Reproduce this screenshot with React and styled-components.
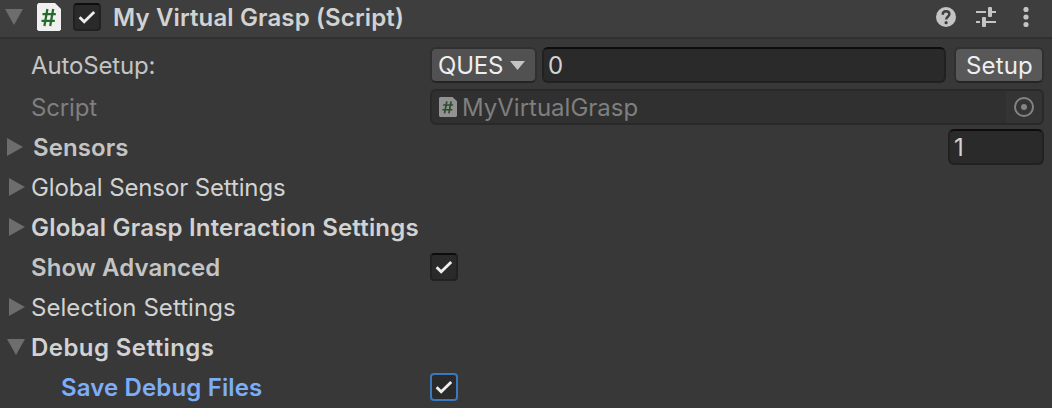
import React from "react";
import styled, { createGlobalStyle, css } from "styled-components";

const GlobalStyle = createGlobalStyle`
  * { box-sizing: border-box; }
  body { margin: 0; background: #383838; overflow: hidden; }
`;

const Inspector = styled.main`
  width: 1052px;
  height: 408px;
  overflow: hidden;
  background: #383838;
  color: #d2d2d2;
  font-family: Inter, "Liberation Sans", sans-serif;
  font-size: 24px;
  line-height: 36px;
  white-space: nowrap;
`;

const Header = styled.header`
  display: flex;
  align-items: center;
  height: 39px;
  padding: 0 19px 4px 5px;
  background: #3e3e3e;
  border-bottom: 2px solid #303030;
`;

const Title = styled.h1`
  flex: 1;
  margin: 0 0 0 12px;
  padding-top: 2px;
  font-size: 24px;
  font-weight: 600;
  line-height: 31px;
  letter-spacing: 0.13px;
`;

const HeaderIcons = styled.div`
  display: flex;
  align-items: center;
  gap: 20px;
`;

const Body = styled.section`
  padding: 4px 8px 0 0;
`;

const Row = styled.div`
  display: flex;
  align-items: center;
  height: ${(p) => p.$height || 40}px;
`;

const LabelCell = styled.div`
  display: flex;
  align-items: center;
  flex: none;
  width: 430px;
  padding-left: ${(p) => p.$indent || 0}px;
`;

const Foldout = styled.span`
  display: flex;
  flex: none;
  width: ${(p) => p.$width}px;
`;

const Label = styled.span`
  padding-top: 2px;
  color: ${(p) => p.$color || "#d2d2d2"};
  font-weight: ${(p) => (p.$bold ? 600 : 400)};
  letter-spacing: ${(p) => p.$spacing || 0}px;
`;

const Check = styled.span`
  display: flex;
  align-items: center;
  justify-content: center;
  flex: none;
  width: 28px;
  height: 28px;
  margin-left: ${(p) => p.$gap || 0}px;
  background: #2a2a2a;
  border: 2px solid ${(p) => (p.$focused ? "#3a79bb" : "#212121")};
  border-top-color: ${(p) => (p.$focused ? "#3a79bb" : "#0d0d0d")};
  border-radius: 4px;
`;

const control = css`
  display: flex;
  align-items: center;
  height: 36px;
  border-radius: 6px;
  line-height: 30px;
`;

const Field = styled.div`
  ${control}
  ${(p) => (p.$width ? `width: ${p.$width}px;` : "flex: 1;")}
  padding: 2px 0 0 4px;
  margin-left: ${(p) => p.$gap || 0}px;
  background: #2a2a2a;
  border: 2px solid #212121;
  border-top-color: #0d0d0d;
`;

const Button = styled.button`
  ${control}
  width: ${(p) => p.$width}px;
  margin: 0 0 0 ${(p) => p.$gap || 0}px;
  padding: 2px 0 0 ${(p) => p.$pad}px;
  color: #eeeeee;
  background: ${(p) => p.$fill};
  border: 2px solid #303030;
  border-bottom-color: #242424;
  font-family: inherit;
  font-size: 24px;
  letter-spacing: ${(p) => p.$spacing || 0}px;
`;

const DropArrowBox = styled.span`
  display: flex;
  padding: 0 0 2px 7px;
`;

const ObjectField = styled.div`
  ${control}
  flex: 1;
  padding-left: 7px;
  color: #7f7f7f;
  background: #303030;
  border: 2px solid #292929;
  overflow: hidden;
`;

const ObjectName = styled.span`
  flex: 1;
  margin-left: 5px;
  padding-top: 2px;
`;

const Picker = styled.span`
  display: flex;
  align-items: center;
  justify-content: center;
  width: 36px;
  height: 32px;
  background: #343434;
`;

const Arrow = ({ open }) =>
  open ? (
    <svg width="18" height="16" viewBox="0 0 18 16"><path d="M0 0H18L9 16Z" fill="#6d6d6d" /></svg>
  ) : (
    <svg width="16" height="18" viewBox="0 0 16 18"><path d="M0 0L16 9L0 18Z" fill="#6d6d6d" /></svg>
  );

const CheckMark = () => (
  <svg width="24" height="24" viewBox="0 0 24 24">
    <path d="M4.6 12.2L9.2 16.8L19.2 7" fill="none" stroke="#eeeeee" strokeWidth="2.8" />
  </svg>
);

const ScriptIcon = ({ width, height, paper, ink }) => (
  <svg width={width} height={height} viewBox="0 0 24 28" preserveAspectRatio="none">
    <path d="M1.5 0H18L24 6V26.5L22.5 28H1.5L0 26.5V1.5Z" fill={paper} />
    <path d="M10.4 6L7.4 23M16.2 6L13.2 23M5.5 11.2H18.8M4.5 17.8H17.8" fill="none" stroke={ink} strokeWidth="2.3" />
  </svg>
);

const HelpIcon = () => (
  <svg width="20" height="20" viewBox="0 0 20 20">
    <circle cx="10" cy="10" r="10" fill="#c4c4c4" />
    <path d="M6.7 7.7C6.7 5.5 8 4.3 10 4.3S13.4 5.6 13.4 7.3C13.4 9.6 10.2 9.4 10.2 12.6" fill="none" stroke="#3e3e3e" strokeWidth="2.4" />
    <circle cx="10.1" cy="15.7" r="1.6" fill="#3e3e3e" />
  </svg>
);

const PresetIcon = () => (
  <svg width="20" height="20" viewBox="0 0 20 20">
    <path d="M0 5H10M16 5H20M0 15H4M10 15H20" stroke="#c4c4c4" strokeWidth="2" />
    <rect x="12" y="0" width="4" height="10" rx="1" fill="#c4c4c4" />
    <rect x="6" y="10" width="4" height="10" rx="1" fill="#c4c4c4" />
  </svg>
);

const MenuIcon = () => (
  <svg width="17" height="20" viewBox="0 0 17 20" fill="#c4c4c4">
    <circle cx="10" cy="2.5" r="2.6" />
    <circle cx="10" cy="10" r="2.6" />
    <circle cx="10" cy="17.5" r="2.6" />
  </svg>
);

const PickerIcon = () => (
  <svg width="20" height="20" viewBox="0 0 20 20">
    <circle cx="10" cy="10" r="9" fill="none" stroke="#848484" strokeWidth="2" />
    <circle cx="10" cy="10" r="3" fill="#848484" />
  </svg>
);

const DropArrow = () => (
  <svg width="15" height="9" viewBox="0 0 15 9"><path d="M0 0H15L7.5 9Z" fill="#c4c4c4" /></svg>
);

export default function App() {
  return (
    <Inspector>
      <GlobalStyle />
      <Header>
        <Foldout $width={32}><Arrow open /></Foldout>
        <ScriptIcon width={24} height={28} paper="#f0f0f0" ink="#256b29" />
        <Check $gap={12}><CheckMark /></Check>
        <Title>My Virtual Grasp (Script)</Title>
        <HeaderIcons>
          <HelpIcon />
          <PresetIcon />
          <MenuIcon />
        </HeaderIcons>
      </Header>
      <Body>
        <Row $height={44}>
          <LabelCell $indent={31}><Label $color="#c4c4c4" $spacing={-0.15}>AutoSetup:</Label></LabelCell>
          <Button $width={107} $pad={6} $fill="#515151" $spacing={-0.2}>
            QUES
            <DropArrowBox><DropArrow /></DropArrowBox>
          </Button>
          <Field $gap={5}>0</Field>
          <Button $width={90} $gap={8} $pad={10} $fill="#585858" $spacing={0.15}>Setup</Button>
        </Row>
        <Row>
          <LabelCell $indent={31}><Label $color="#7f7f7f" $spacing={-0.15}>Script</Label></LabelCell>
          <ObjectField>
            <ScriptIcon width={18} height={20} paper="#929292" ink="#2b4f2d" />
            <ObjectName>MyVirtualGrasp</ObjectName>
            <Picker><PickerIcon /></Picker>
          </ObjectField>
        </Row>
        <Row>
          <LabelCell $indent={7}>
            <Foldout $width={26}><Arrow /></Foldout>
            <Label $bold $color="#c4c4c4" $spacing={0.08}>Sensors</Label>
          </LabelCell>
          <Field $width={96} $gap={518}>1</Field>
        </Row>
        <Row>
          <LabelCell $indent={9}>
            <Foldout $width={22}><Arrow /></Foldout>
            <Label $spacing={-0.13}>Global Sensor Settings</Label>
          </LabelCell>
        </Row>
        <Row>
          <LabelCell $indent={9}>
            <Foldout $width={22}><Arrow /></Foldout>
            <Label $bold $spacing={0.19}>Global Grasp Interaction Settings</Label>
          </LabelCell>
        </Row>
        <Row>
          <LabelCell $indent={31}><Label $bold $color="#c4c4c4" $spacing={0.06}>Show Advanced</Label></LabelCell>
          <Check><CheckMark /></Check>
        </Row>
        <Row>
          <LabelCell $indent={9}>
            <Foldout $width={22}><Arrow /></Foldout>
            <Label $spacing={0.05}>Selection Settings</Label>
          </LabelCell>
        </Row>
        <Row>
          <LabelCell $indent={7}>
            <Foldout $width={24}><Arrow open /></Foldout>
            <Label $bold $spacing={0.43}>Debug Settings</Label>
          </LabelCell>
        </Row>
        <Row>
          <LabelCell $indent={61}><Label $bold $color="#7eadf8" $spacing={0.14}>Save Debug Files</Label></LabelCell>
          <Check $focused><CheckMark /></Check>
        </Row>
      </Body>
    </Inspector>
  );
}
